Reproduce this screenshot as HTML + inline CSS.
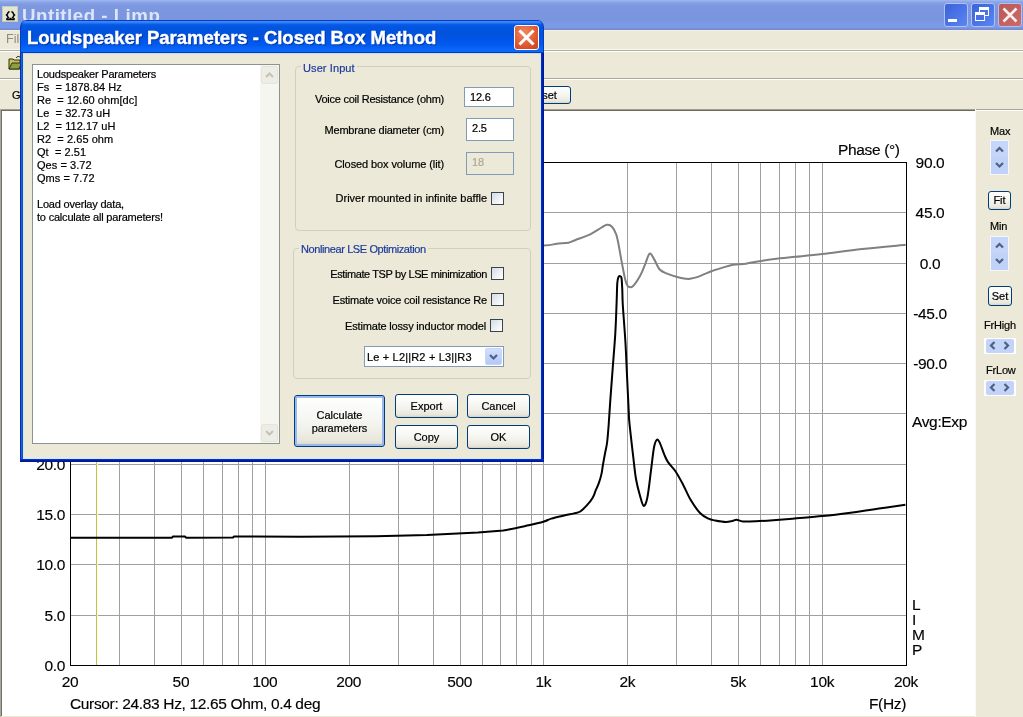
<!DOCTYPE html><html><head><meta charset="utf-8"><style>
*{box-sizing:border-box}
body{margin:0;width:1023px;height:717px;overflow:hidden;position:relative;background:#ECE9D8;font-family:"Liberation Sans",sans-serif;}
#w{position:absolute;left:0;top:0;width:1023px;height:717px;will-change:transform;opacity:0.999}
.abs{position:absolute}
.t{position:absolute;white-space:pre;line-height:1;}
.ui{font-size:11px;color:#000;letter-spacing:-0.2px;-webkit-text-stroke:0.2px currentColor}
.ch{font-size:15.5px;color:#000;letter-spacing:-0.35px;-webkit-text-stroke:0.15px #000}
.btn{position:absolute;border:1px solid #003C74;border-radius:3px;background:linear-gradient(#FFFFFF,#F3F3EE 60%,#E8E6DA 90%,#D6D0C5);font-size:11px;text-align:center;line-height:1;color:#000;-webkit-text-stroke:0.2px #000}
.tb{position:absolute;border:1px solid #7F9DB9;background:#fff}
.cb{position:absolute;width:13px;height:13px;border:1px solid #3A4450;background:linear-gradient(135deg,#D6DCE4,#F4F6F8 70%,#FFFFFF)}
.grp{position:absolute;border:1px solid #D0D0BF;border-radius:4px}
.spin{position:absolute;background:#C1D3FB;border:1px solid #fff}
</style></head><body><div id="w">
<div class="abs" style="left:0;top:0;width:1023px;height:30px;background:linear-gradient(#A0B8F0 0px,#8CA6E8 2px,#7D98DF 5px,#7A95DE 20px,#7C9CE8 26px,#7A98E4 28px,#7888D0 29px,#7888D0 30px)"></div>
<svg class="abs" style="left:2px;top:6px" width="16" height="16"><rect x="0" y="0" width="16" height="16" fill="#E4E6D4"/><rect x="0.5" y="0.5" width="15" height="15" fill="none" stroke="#C8CCB8"/><path d="M7.5 5.5 Q5.5 6.5 5.5 8 L4.5 9 L5.5 10 Q5.5 11.5 7 12 M9.5 5.5 Q11.5 6.5 11.5 8 L12.5 9 L11.5 10 Q11.5 11.5 10 12" stroke="#000" stroke-width="1.5" fill="none"/><path d="M5 12 L5 13.5 L12 13.5 L12 12 M7.5 12.5 L9.5 12.5" stroke="#000" stroke-width="1.6" fill="none"/></svg>
<div class="t" style="left:22px;top:7px;font-size:18.7px;font-weight:bold;color:#DCE6FA;letter-spacing:0.5px">Untitled - Limp</div>
<div class="abs" style="left:944px;top:3px;width:24px;height:24px;border:1px solid #B0C2F4;border-radius:3px;background:linear-gradient(135deg,#3A62DA,#5A86F2)"></div>
<div class="abs" style="left:971px;top:3px;width:24px;height:24px;border:1px solid #B0C2F4;border-radius:3px;background:linear-gradient(135deg,#3A62DA,#5A86F2)"></div>
<div class="abs" style="left:998px;top:3px;width:24px;height:24px;border:1px solid #B0C2F4;border-radius:3px;background:linear-gradient(135deg,#B85858,#CC6A66)"></div>
<div class="abs" style="left:948px;top:19px;width:9px;height:3px;background:#fff"></div>
<div class="abs" style="left:979px;top:7px;width:10px;height:9px;border:1px solid #fff;border-top-width:3px"></div><div class="abs" style="left:975px;top:12px;width:10px;height:9px;border:1px solid #fff;border-top-width:3px;background:#4670E4"></div>
<svg class="abs" style="left:998px;top:3px" width="25" height="25"><path d="M5.5 5.5 L18.5 18.5 M18.5 5.5 L5.5 18.5" stroke="#FFF0F0" stroke-width="2.6"/></svg>
<div class="t" style="left:6px;top:33px;font-size:12.5px;color:#8C8C84">File</div>
<div class="abs" style="left:0;top:30px;width:1023px;height:1px;background:#F2F0E4"></div><div class="abs" style="left:0;top:49px;width:1023px;height:1px;background:#FAFAF2"></div><div class="abs" style="left:0;top:50px;width:1023px;height:1px;background:#AEAC9E"></div><div class="abs" style="left:0;top:51px;width:1023px;height:1px;background:#fff"></div>
<svg class="abs" style="left:8px;top:55px" width="14" height="16"><path d="M1 4 L5 4 L6 5 L12 5 L12 14 L1 14 Z" fill="#C8C060" stroke="#303010"/><path d="M1 14 L4 8 L13.5 8 L11 14 Z" fill="#8CA040" stroke="#303010"/><path d="M8 3 Q10 0 12 2" stroke="#303010" fill="none"/></svg>
<div class="abs" style="left:0;top:78px;width:1023px;height:1px;background:#ACA899"></div><div class="abs" style="left:0;top:79px;width:1023px;height:1px;background:#fff"></div>
<div class="t ui" style="left:12px;top:90px">Ge</div>
<div class="btn" style="left:500px;top:86px;width:71px;height:18px;padding-top:3px;padding-left:14px;font-size:11px">Reset</div>
<div class="abs" style="left:0;top:109px;width:975px;height:1px;background:#A19F92"></div>
<div class="abs" style="left:0;top:110px;width:975px;height:1px;background:#6E6C60"></div>
<div class="abs" style="left:976px;top:109px;width:47px;height:1px;background:#A8A698"></div>
<div class="abs" style="left:976px;top:110px;width:47px;height:1px;background:#fff"></div>
<div class="abs" style="left:0;top:109px;width:1px;height:608px;background:#ACA899"></div>
<div class="abs" style="left:1px;top:110px;width:1px;height:606px;background:#716F64"></div>
<div class="abs" style="left:2px;top:111px;width:973px;height:605px;background:#fff"></div>
<div class="abs" style="left:975px;top:109px;width:1px;height:608px;background:#FAFAF6"></div>
<svg class="abs" style="left:0;top:0" width="1023" height="717" shape-rendering="crispEdges"><rect x="119" y="162" width="1" height="503" fill="#A0A0A0"/><rect x="154" y="162" width="1" height="503" fill="#A0A0A0"/><rect x="181" y="162" width="1" height="503" fill="#A0A0A0"/><rect x="203" y="162" width="1" height="503" fill="#A0A0A0"/><rect x="222" y="162" width="1" height="503" fill="#A0A0A0"/><rect x="238" y="162" width="1" height="503" fill="#A0A0A0"/><rect x="252" y="162" width="1" height="503" fill="#A0A0A0"/><rect x="265" y="162" width="1" height="503" fill="#A0A0A0"/><rect x="349" y="162" width="1" height="503" fill="#A0A0A0"/><rect x="398" y="162" width="1" height="503" fill="#A0A0A0"/><rect x="433" y="162" width="1" height="503" fill="#A0A0A0"/><rect x="460" y="162" width="1" height="503" fill="#A0A0A0"/><rect x="482" y="162" width="1" height="503" fill="#A0A0A0"/><rect x="500" y="162" width="1" height="503" fill="#A0A0A0"/><rect x="516" y="162" width="1" height="503" fill="#A0A0A0"/><rect x="531" y="162" width="1" height="503" fill="#A0A0A0"/><rect x="543" y="162" width="1" height="503" fill="#A0A0A0"/><rect x="627" y="162" width="1" height="503" fill="#A0A0A0"/><rect x="676" y="162" width="1" height="503" fill="#A0A0A0"/><rect x="711" y="162" width="1" height="503" fill="#A0A0A0"/><rect x="738" y="162" width="1" height="503" fill="#A0A0A0"/><rect x="760" y="162" width="1" height="503" fill="#A0A0A0"/><rect x="779" y="162" width="1" height="503" fill="#A0A0A0"/><rect x="795" y="162" width="1" height="503" fill="#A0A0A0"/><rect x="809" y="162" width="1" height="503" fill="#A0A0A0"/><rect x="822" y="162" width="1" height="503" fill="#A0A0A0"/><rect x="70" y="212" width="836" height="1" fill="#A0A0A0"/><rect x="70" y="263" width="836" height="1" fill="#A0A0A0"/><rect x="70" y="313" width="836" height="1" fill="#A0A0A0"/><rect x="70" y="363" width="836" height="1" fill="#A0A0A0"/><rect x="70" y="413" width="836" height="1" fill="#A0A0A0"/><rect x="70" y="464" width="836" height="1" fill="#A0A0A0"/><rect x="70" y="514" width="836" height="1" fill="#A0A0A0"/><rect x="70" y="564" width="836" height="1" fill="#A0A0A0"/><rect x="70" y="615" width="836" height="1" fill="#A0A0A0"/><rect x="96" y="163" width="1" height="502" fill="#BDBD6E"/><rect x="97" y="163" width="1" height="502" fill="#FFFFC8"/><rect x="70" y="162" width="837" height="1" fill="#000"/><rect x="70" y="665" width="837" height="1" fill="#000"/><rect x="70" y="162" width="1" height="504" fill="#000"/><rect x="906" y="162" width="1" height="504" fill="#000"/><path d="M500.00 247.00 C507.28 246.75 534.25 246.03 543.70 245.50 C553.15 244.97 552.57 244.27 556.70 243.80 C560.83 243.33 565.43 243.30 568.50 242.70 C571.57 242.10 571.48 241.60 575.10 240.20 C578.72 238.80 586.28 236.12 590.20 234.30 C594.12 232.48 595.80 230.88 598.60 229.30 C601.40 227.72 604.77 225.22 607.00 224.80 C609.23 224.38 610.47 225.22 612.00 226.80 C613.53 228.38 615.08 231.23 616.20 234.30 C617.32 237.37 617.73 240.32 618.70 245.20 C619.67 250.08 620.88 257.75 622.00 263.60 C623.12 269.45 624.42 276.53 625.40 280.30 C626.38 284.07 626.65 285.22 627.90 286.20 C629.15 287.18 630.82 288.02 632.90 286.20 C634.98 284.38 638.32 279.07 640.40 275.30 C642.48 271.53 643.87 267.22 645.40 263.60 C646.93 259.98 648.20 254.43 649.60 253.60 C651.00 252.77 652.12 255.95 653.80 258.60 C655.48 261.25 657.47 267.00 659.70 269.50 C661.93 272.00 664.28 272.35 667.20 273.60 C670.12 274.85 674.13 276.15 677.20 277.00 C680.27 277.85 683.47 278.40 685.60 278.70 C687.73 279.00 687.83 279.15 690.00 278.80 C692.17 278.45 695.02 277.87 698.60 276.60 C702.18 275.33 708.27 272.45 711.50 271.20 C714.73 269.95 714.42 270.17 718.00 269.10 C721.58 268.03 728.35 265.70 733.00 264.80 C737.65 263.90 741.23 264.35 745.90 263.70 C750.57 263.05 755.27 261.80 761.00 260.90 C766.73 260.00 774.57 258.98 780.30 258.30 C786.03 257.62 788.40 257.52 795.40 256.80 C802.40 256.08 811.20 255.28 822.30 254.00 C833.40 252.72 848.10 250.63 862.00 249.10 C875.90 247.57 898.42 245.52 905.70 244.80" fill="none" stroke="#808080" stroke-width="2" stroke-linejoin="round" shape-rendering="auto"/><path d="M71.00 537.70 L172.00 537.70 L173.00 536.50 L185.00 536.50 L186.00 537.70 L233.00 537.50 L234.00 536.50 L300.00 536.80 L376.00 536.30 L427.00 535.00 L452.50 533.70 L477.90 532.40 L503.30 530.40 C511.77 529.22 521.92 526.78 528.70 525.30 C535.48 523.82 540.23 522.62 544.00 521.50 C547.77 520.38 547.78 519.63 551.30 518.60 C554.82 517.57 561.33 516.17 565.10 515.30 C568.87 514.43 571.38 514.03 573.90 513.40 C576.42 512.77 578.02 512.87 580.20 511.50 C582.38 510.13 584.92 507.50 587.00 505.20 C589.08 502.90 591.23 500.20 592.70 497.70 C594.17 495.20 594.75 492.70 595.80 490.20 C596.85 487.70 598.05 485.42 599.00 482.70 C599.95 479.98 600.83 476.93 601.50 473.90 C602.17 470.87 602.38 468.07 603.00 464.50 C603.62 460.93 604.52 456.17 605.20 452.50 C605.88 448.83 606.52 447.17 607.10 442.50 C607.68 437.83 608.17 431.52 608.70 424.50 C609.23 417.48 609.62 409.98 610.30 400.40 C610.98 390.82 611.97 378.15 612.80 367.00 C613.63 355.85 614.67 344.17 615.30 333.50 C615.93 322.83 616.27 311.42 616.60 303.00 C616.93 294.58 616.98 287.33 617.30 283.00 C617.62 278.67 618.05 278.13 618.50 277.00 C618.95 275.87 619.50 276.03 620.00 276.20 C620.50 276.37 621.12 275.70 621.50 278.00 C621.88 280.30 622.08 285.50 622.30 290.00 C622.52 294.50 622.28 296.37 622.80 305.00 C623.32 313.63 624.70 330.08 625.40 341.80 C626.10 353.52 626.45 363.85 627.00 375.30 C627.55 386.75 628.30 402.62 628.70 410.50 C629.10 418.38 628.65 414.93 629.40 422.60 C630.15 430.27 632.10 447.10 633.20 456.50 C634.30 465.90 634.90 472.58 636.00 479.00 C637.10 485.42 638.53 490.53 639.80 495.00 C641.07 499.47 642.35 505.32 643.60 505.80 C644.85 506.28 646.05 503.92 647.30 497.90 C648.55 491.88 650.00 478.02 651.10 469.70 C652.20 461.38 652.97 452.97 653.90 448.00 C654.83 443.03 655.75 440.83 656.70 439.90 C657.65 438.97 658.33 439.95 659.60 442.40 C660.87 444.85 662.90 451.32 664.30 454.60 C665.70 457.88 666.12 459.28 668.00 462.10 C669.88 464.92 673.08 467.73 675.60 471.50 C678.12 475.27 680.60 479.98 683.10 484.70 C685.60 489.42 687.78 495.08 690.60 499.80 C693.42 504.52 697.00 509.85 700.00 513.00 C703.00 516.15 706.10 517.47 708.60 518.70 C711.10 519.93 712.13 519.87 715.00 520.40 C717.87 520.93 722.92 521.82 725.80 521.90 C728.68 521.98 730.50 521.25 732.30 520.90 C734.10 520.55 734.82 519.70 736.60 519.80 C738.38 519.90 739.78 521.25 743.00 521.50 C746.22 521.75 750.88 521.52 755.90 521.30 C760.92 521.08 766.28 520.70 773.10 520.20 C779.92 519.70 788.55 518.98 796.80 518.30 C805.05 517.62 813.65 517.03 822.60 516.10 C831.55 515.17 840.47 514.05 850.50 512.70 C860.53 511.35 873.65 509.33 882.80 508.00 C891.95 506.67 901.63 505.25 905.40 504.70" fill="none" stroke="#000" stroke-width="2" stroke-linejoin="round" shape-rendering="auto"/></svg>
<div class="t ch" style="left:0;width:65px;text-align:right;top:658px">0.0</div>
<div class="t ch" style="left:0;width:65px;text-align:right;top:608px">5.0</div>
<div class="t ch" style="left:0;width:65px;text-align:right;top:557px">10.0</div>
<div class="t ch" style="left:0;width:65px;text-align:right;top:507px">15.0</div>
<div class="t ch" style="left:0;width:65px;text-align:right;top:457px">20.0</div>
<div class="t ch" style="left:900px;width:60px;text-align:center;top:155px">90.0</div>
<div class="t ch" style="left:900px;width:60px;text-align:center;top:205px">45.0</div>
<div class="t ch" style="left:900px;width:60px;text-align:center;top:256px">0.0</div>
<div class="t ch" style="left:900px;width:60px;text-align:center;top:306px">-45.0</div>
<div class="t ch" style="left:900px;width:60px;text-align:center;top:356px">-90.0</div>
<div class="t ch" style="left:838px;top:142px">Phase (°)</div>
<div class="t ch" style="left:912px;top:414px">Avg:Exp</div>
<div class="t ch" style="left:30.0px;width:80px;text-align:center;top:674px">20</div>
<div class="t ch" style="left:140.9px;width:80px;text-align:center;top:674px">50</div>
<div class="t ch" style="left:224.8px;width:80px;text-align:center;top:674px">100</div>
<div class="t ch" style="left:308.7px;width:80px;text-align:center;top:674px">200</div>
<div class="t ch" style="left:419.6px;width:80px;text-align:center;top:674px">500</div>
<div class="t ch" style="left:503.4px;width:80px;text-align:center;top:674px">1k</div>
<div class="t ch" style="left:587.3px;width:80px;text-align:center;top:674px">2k</div>
<div class="t ch" style="left:698.2px;width:80px;text-align:center;top:674px">5k</div>
<div class="t ch" style="left:782.1px;width:80px;text-align:center;top:674px">10k</div>
<div class="t ch" style="left:866.0px;width:80px;text-align:center;top:674px">20k</div>
<div class="t ch" style="left:70px;top:696px">Cursor: 24.83 Hz, 12.65 Ohm, 0.4 deg</div>
<div class="t ch" style="left:869px;top:696px">F(Hz)</div>
<div class="t ch" style="left:912px;top:597px">L</div>
<div class="t ch" style="left:912px;top:612px">I</div>
<div class="t ch" style="left:912px;top:627px">M</div>
<div class="t ch" style="left:912px;top:642px">P</div>
<div class="t ui" style="left:990px;top:126px">Max</div>
<svg class="abs" style="left:990px;top:140px" width="19" height="35"><rect x="0.5" y="0.5" width="18" height="34" fill="#fff" stroke="#F4F6FC"/><rect x="1" y="1" width="17" height="33" rx="1" fill="#C0D2F8"/><rect x="1" y="1" width="17" height="16" fill="#C6D6FA"/><path d="M6 11.5 L9.5 8 L13 11.5" fill="none" stroke="#4D6185" stroke-width="2.2"/><path d="M6 23 L9.5 26.5 L13 23" fill="none" stroke="#4D6185" stroke-width="2.2"/></svg>
<div class="btn" style="left:988px;top:191px;width:23px;height:19px;padding-top:3px">Fit</div>
<div class="t ui" style="left:990px;top:221px">Min</div>
<svg class="abs" style="left:990px;top:236px" width="19" height="35"><rect x="0.5" y="0.5" width="18" height="34" fill="#fff" stroke="#F4F6FC"/><rect x="1" y="1" width="17" height="33" rx="1" fill="#C0D2F8"/><rect x="1" y="1" width="17" height="16" fill="#C6D6FA"/><path d="M6 11.5 L9.5 8 L13 11.5" fill="none" stroke="#4D6185" stroke-width="2.2"/><path d="M6 23 L9.5 26.5 L13 23" fill="none" stroke="#4D6185" stroke-width="2.2"/></svg>
<div class="btn" style="left:988px;top:286px;width:24px;height:20px;padding-top:4px">Set</div>
<div class="t ui" style="left:984px;top:320px">FrHigh</div>
<svg class="abs" style="left:984px;top:338px" width="32" height="16"><rect x="0" y="0" width="32" height="16" fill="#fff"/><rect x="2" y="1" width="28" height="14" rx="2" fill="#C4D4F8"/><path d="M10.5 4 L7 7.5 L10.5 11" fill="none" stroke="#4D6185" stroke-width="2.2"/><path d="M20.5 4 L24 7.5 L20.5 11" fill="none" stroke="#4D6185" stroke-width="2.2"/></svg>
<div class="t ui" style="left:986px;top:365px">FrLow</div>
<svg class="abs" style="left:984px;top:380px" width="32" height="16"><rect x="0" y="0" width="32" height="16" fill="#fff"/><rect x="2" y="1" width="28" height="14" rx="2" fill="#C4D4F8"/><path d="M10.5 4 L7 7.5 L10.5 11" fill="none" stroke="#4D6185" stroke-width="2.2"/><path d="M20.5 4 L24 7.5 L20.5 11" fill="none" stroke="#4D6185" stroke-width="2.2"/></svg>
<div class="abs" style="left:20px;top:20px;width:524px;height:442px;background:#0A3AC0;border-radius:7px 7px 0 0"></div>
<div class="abs" style="left:21px;top:20px;width:522px;height:33px;border-radius:7px 7px 0 0;background:linear-gradient(#0A3CC0 0px,#0A3CC0 1px,#3D8CFF 1px,#2E7BF5 3px,#0A5EE8 4px,#0055E0 7px,#0052DC 15px,#0058F0 24px,#0A66F5 29px,#0A6AF8 32px,#0A3AB0 32px)"></div>
<div class="abs" style="left:21px;top:53px;width:2px;height:408px;background:#1F5FE0"></div>
<div class="abs" style="left:541px;top:53px;width:3px;height:409px;background:linear-gradient(90deg,#0530C8 0 1px,#0020A8 1px 2px,#001890 2px)"></div>
<div class="abs" style="left:20px;top:459px;width:524px;height:3px;background:linear-gradient(#0530C8 0 1px,#0020A8 1px 2px,#001890 2px)"></div>
<div class="abs" style="left:20px;top:53px;width:1px;height:406px;background:#0030B8"></div>
<div class="abs" style="left:22px;top:53px;width:1px;height:406px;background:#1A4FA8"></div>
<div class="abs" style="left:23px;top:53px;width:518px;height:406px;background:#ECE9D8;border:1px solid #D0E8FF;border-top-color:#C8DCF8"></div>
<div class="t" style="left:28px;top:30px;font-size:18.55px;font-weight:bold;color:#0A1E70;opacity:.6;letter-spacing:-0.04px;-webkit-text-stroke:0.4px #0A1E70">Loudspeaker Parameters - Closed Box Method</div>
<div class="t" style="left:27px;top:29px;font-size:18.55px;font-weight:bold;color:#fff;letter-spacing:-0.04px;-webkit-text-stroke:0.4px #fff">Loudspeaker Parameters - Closed Box Method</div>
<div class="abs" style="left:514px;top:25px;width:25px;height:25px;border:1px solid #fff;border-radius:3px;background:radial-gradient(circle at 40% 30%,#F08860,#E0582F 60%,#C84018)"></div>
<svg class="abs" style="left:514px;top:25px" width="25" height="25"><path d="M6.5 6.5 L18.5 18.5 M18.5 6.5 L6.5 18.5" stroke="#fff" stroke-width="3" stroke-linecap="square"/></svg>
<div class="abs" style="left:32px;top:64px;width:248px;height:380px;background:#fff;border:1px solid #8A9493"></div>
<div class="abs" style="left:260px;top:65px;width:19px;height:378px;background:#F6F6F1"></div>
<div class="abs" style="left:261px;top:66px;width:17px;height:18px;background:#EEEDE5;border:1px solid #E6E4DA;border-radius:2px"></div>
<div class="abs" style="left:261px;top:424px;width:17px;height:18px;background:#EEEDE5;border:1px solid #E6E4DA;border-radius:2px"></div>
<svg class="abs" style="left:261px;top:66px" width="17" height="18"><path d="M5 11 L8.5 7.5 L12 11" stroke="#C4C2B8" stroke-width="2" fill="none"/></svg>
<svg class="abs" style="left:261px;top:424px" width="17" height="18"><path d="M5 7 L8.5 10.5 L12 7" stroke="#C4C2B8" stroke-width="2" fill="none"/></svg>
<div class="t ui" style="left:37px;top:69px;letter-spacing:-0.2px">Loudspeaker Parameters</div>
<div class="t ui" style="left:37px;top:82px;letter-spacing:0.05px">Fs  = 1878.84 Hz</div>
<div class="t ui" style="left:37px;top:95px;letter-spacing:0.05px">Re  = 12.60 ohm[dc]</div>
<div class="t ui" style="left:37px;top:108px;letter-spacing:0.05px">Le  = 32.73 uH</div>
<div class="t ui" style="left:37px;top:121px;letter-spacing:0.05px">L2  = 112.17 uH</div>
<div class="t ui" style="left:37px;top:134px;letter-spacing:0.05px">R2  = 2.65 ohm</div>
<div class="t ui" style="left:37px;top:147px;letter-spacing:0.05px">Qt  = 2.51</div>
<div class="t ui" style="left:37px;top:160px;letter-spacing:0.05px">Qes = 3.72</div>
<div class="t ui" style="left:37px;top:173px;letter-spacing:0.05px">Qms = 7.72</div>
<div class="t ui" style="left:37px;top:186px;letter-spacing:0.05px"></div>
<div class="t ui" style="left:37px;top:199px;letter-spacing:-0.2px">Load overlay data,</div>
<div class="t ui" style="left:37px;top:212px;letter-spacing:-0.2px">to calculate all parameters!</div>
<div class="grp" style="left:295px;top:66px;width:236px;height:165px"></div>
<div class="t ui" style="left:301px;top:63px;padding:0 2px;background:#ECE9D8;color:#1C3C9C;letter-spacing:0.1px">User Input</div>
<div class="grp" style="left:293px;top:248px;width:238px;height:131px"></div>
<div class="t ui" style="left:299px;top:244px;padding:0 2px;background:#ECE9D8;color:#1C3C9C;letter-spacing:-0.4px">Nonlinear LSE Optimization</div>
<div class="t ui" style="left:244px;width:200px;text-align:right;top:94px;letter-spacing:-0.25px">Voice coil Resistance (ohm)</div>
<div class="t ui" style="left:244px;width:200px;text-align:right;top:125px;letter-spacing:-0.18px">Membrane diameter (cm)</div>
<div class="t ui" style="left:244px;width:200px;text-align:right;top:159px;letter-spacing:-0.1px">Closed box volume (lit)</div>
<div class="tb" style="left:464px;top:87px;width:50px;height:20px"></div><div class="t ui" style="left:470px;top:92px">12.6</div>
<div class="tb" style="left:466px;top:118px;width:48px;height:23px"></div><div class="t ui" style="left:472px;top:123px">2.5</div>
<div class="tb" style="left:466px;top:152px;width:48px;height:23px;background:#ECE9D8"></div><div class="t ui" style="left:472px;top:157px;color:#ACA899">18</div>
<div class="t ui" style="left:287px;width:200px;text-align:right;top:193px;letter-spacing:0px">Driver mounted in infinite baffle</div>
<div class="cb" style="left:491px;top:192px"></div>
<div class="t ui" style="left:287px;width:200px;text-align:right;top:269px;letter-spacing:-0.4px">Estimate TSP by LSE minimization</div>
<div class="cb" style="left:491px;top:267px"></div>
<div class="t ui" style="left:287px;width:200px;text-align:right;top:295px;letter-spacing:-0.21px">Estimate voice coil resistance Re</div>
<div class="cb" style="left:491px;top:293px"></div>
<div class="t ui" style="left:286px;width:200px;text-align:right;top:321px;letter-spacing:-0.18px">Estimate lossy inductor model</div>
<div class="cb" style="left:490px;top:319px"></div>
<div class="tb" style="left:364px;top:346px;width:140px;height:21px"></div>
<div class="t ui" style="left:367px;top:352px;letter-spacing:0.17px">Le + L2||R2 + L3||R3</div>
<div class="abs" style="left:485px;top:348px;width:17px;height:17px;background:linear-gradient(#D2DEFD,#B4C8F6);border:1px solid #C6D4F7;border-radius:2px"></div>
<svg class="abs" style="left:485px;top:348px" width="17" height="17"><path d="M5 7 L8.5 10.5 L12 7" stroke="#4D6185" stroke-width="2.2" fill="none"/></svg>
<div class="btn" style="left:294px;top:395px;width:91px;height:52px;padding-top:13px;box-shadow:inset 0 0 0 2px #98B8F0;line-height:13px">Calculate<br>parameters</div>
<div class="btn" style="left:395px;top:394px;width:63px;height:24px;padding-top:6px">Export</div>
<div class="btn" style="left:467px;top:394px;width:63px;height:24px;padding-top:6px">Cancel</div>
<div class="btn" style="left:395px;top:425px;width:63px;height:24px;padding-top:6px">Copy</div>
<div class="btn" style="left:467px;top:425px;width:63px;height:24px;padding-top:6px">OK</div>
</div></body></html>
